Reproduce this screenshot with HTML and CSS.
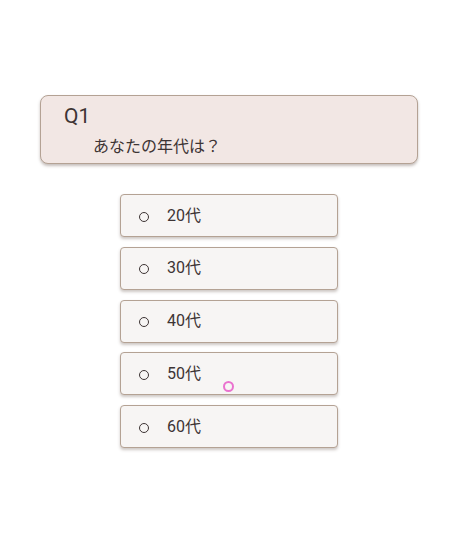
FILE: index.html
```html
<!DOCTYPE html>
<html lang="ja">
<head>
<meta charset="utf-8">
<link rel="stylesheet" href="styles.css">
</head>
<body>
<main class="page">
  <section class="question">
    <div class="qnum">Q1</div>
    <div class="qtext">あなたの年代は？</div>
  </section>
  <ul class="options">
    <li class="option"><span class="radio"></span><span class="label">20代</span></li>
    <li class="option"><span class="radio"></span><span class="label">30代</span></li>
    <li class="option"><span class="radio"></span><span class="label">40代</span></li>
    <li class="option"><span class="radio"></span><span class="label">50代</span></li>
    <li class="option"><span class="radio"></span><span class="label">60代</span></li>
  </ul>
  <span class="cursor"></span>
</main>
</body>
</html>
```

FILE: styles.css
```css
html, body {
  margin: 0;
  padding: 0;
  background: #ffffff;
}
body {
  font-family: Roboto, "Noto Sans CJK JP", sans-serif;
  color: #3d3434;
}
.page {
  position: relative;
  width: 471px;
  height: 550px;
  padding-top: 95px;
  box-sizing: border-box;
}
.question {
  margin-left: 40px;
  width: 378px;
  height: 69px;
  box-sizing: border-box;
  background: #f2e7e4;
  border: 1px solid #b4a294;
  border-radius: 8px;
  box-shadow: 0 2px 3px rgba(90, 70, 60, 0.35);
  padding: 8px 0 0 23px;
}
.qnum {
  font-size: 21px;
  line-height: 24px;
}
.qtext {
  font-size: 16px;
  line-height: 20px;
  margin-top: 9px;
  padding-left: 29px;
}
.options {
  list-style: none;
  margin: 30px 0 0 120px;
  padding: 0;
  width: 218px;
  display: flex;
  flex-direction: column;
  gap: 9.75px;
}
.option {
  height: 43px;
  box-sizing: border-box;
  background: #f7f5f4;
  border: 1px solid #b4a294;
  border-radius: 4px;
  box-shadow: 0 2px 3px rgba(90, 70, 60, 0.3);
  display: flex;
  align-items: center;
  padding-left: 18px;
}
.radio {
  width: 8px;
  height: 8px;
  margin-top: 2px;
  border: 1px solid #3d3434;
  border-radius: 50%;
}
.label {
  margin-left: 18px;
  font-size: 16px;
  line-height: 24px;
}
.cursor {
  position: absolute;
  left: 223px;
  top: 381px;
  width: 7px;
  height: 7px;
  border: 2px solid #ea72cf;
  border-radius: 50%;
}
```
